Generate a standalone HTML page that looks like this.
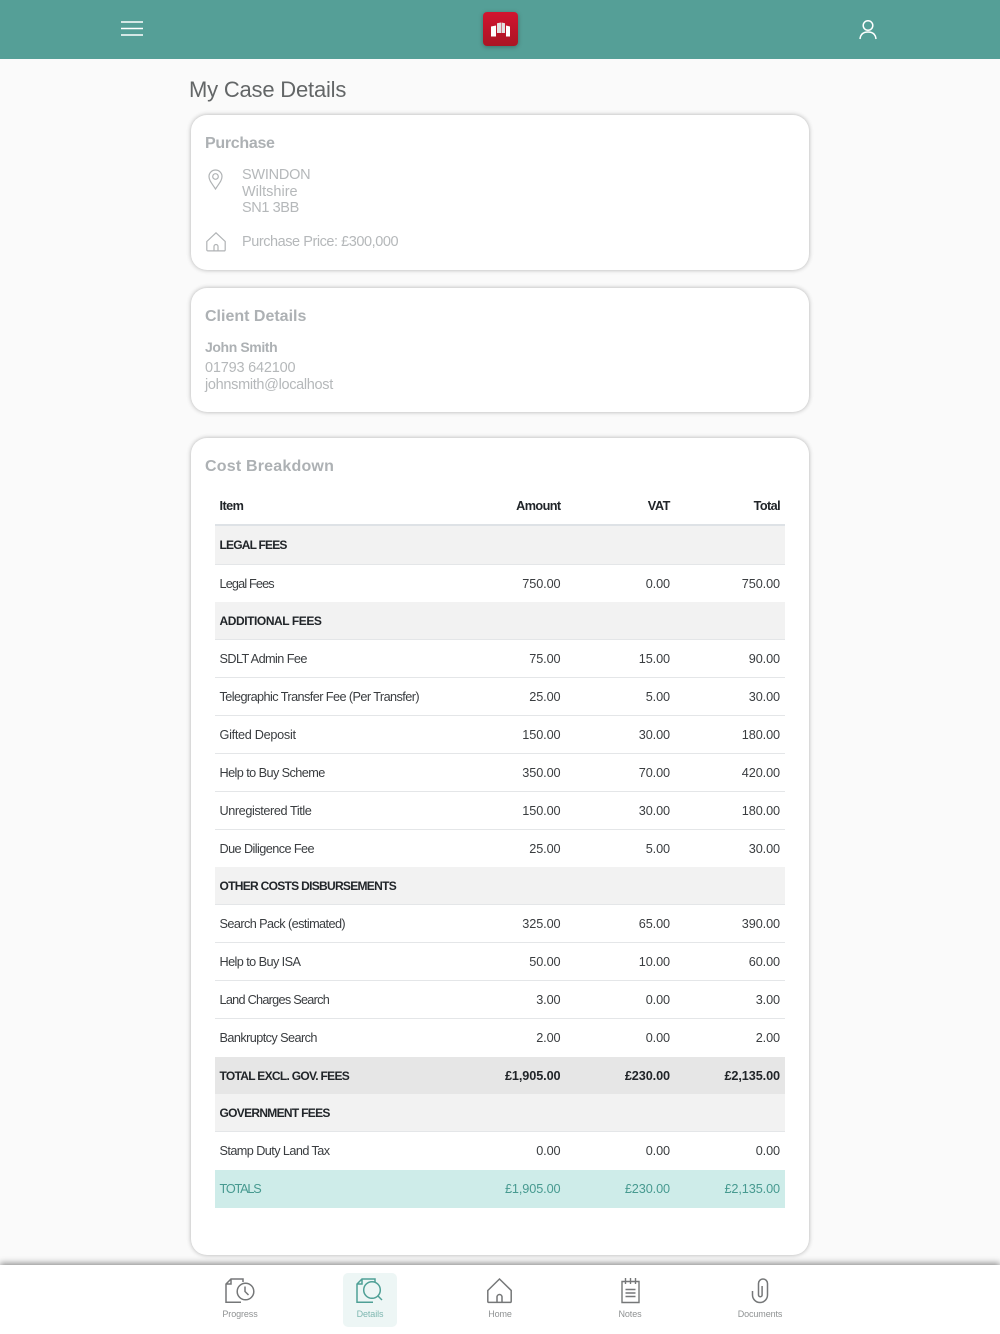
<!DOCTYPE html>
<html><head><meta charset="utf-8"><title>My Case Details</title>
<style>
*{box-sizing:border-box}
html,body{margin:0;padding:0}
body{width:1000px;height:1334px;position:relative;overflow:hidden;background:#fafafa;font-family:"Liberation Sans",sans-serif;color:#212529}
.a{position:absolute;white-space:nowrap}
.top{position:absolute;left:0;top:0;width:1000px;height:59px;background:#559f97}
.card{position:absolute;left:191px;width:618px;background:#fff;border-radius:16px;box-shadow:0 0 5px rgba(0,0,0,.3)}
.h{position:absolute;font-weight:bold;font-size:16px;color:#adb1b4;line-height:20px;white-space:nowrap}
.g{position:absolute;font-size:14.5px;color:#b5b8ba;line-height:17px;white-space:nowrap}
.r{position:absolute;left:215px;width:570px;height:38px;font-size:12.7px;line-height:37px;color:#3a3d40;border-bottom:1px solid #e4e6e8}
.r span{position:absolute;top:1px;text-align:right;width:100px;letter-spacing:-.1px}
.r span:nth-child(1){left:4.500px;text-align:left;width:260px;letter-spacing:-.58px;font-size:12.700px}
.r span:nth-child(2){left:245.500px}
.r span:nth-child(3){left:355px}
.r span:nth-child(4){left:465px}
.s{background:#f2f2f2;font-weight:bold;color:#212529}
.r.s span:nth-child(1),.r.t span:nth-child(1){font-size:12px;letter-spacing:-.7px}
.t{background:#e6e6e6;font-weight:bold;color:#212529;border:0}
.m{background:#ceecE9;color:#479a90;border:0}
.r.m span:nth-child(1){letter-spacing:-1.2px}
.nav{position:absolute;left:0;top:1265px;width:1000px;height:69px;background:#fff;box-shadow:0 -2px 6px rgba(0,0,0,.42)}
.l{position:absolute;top:1308px;width:100px;text-align:center;font-size:9px;line-height:12px;color:#8f9293;letter-spacing:-.1px}
svg{position:absolute;overflow:visible;fill:none}
</style></head><body>

<div class="top"></div>
<svg style="left:121px;top:21px" width="22" height="15" stroke="#fff" stroke-width="1.600"><path d="M0 1h22M0 7.500h22M0 14h22"/></svg>
<div class="a" style="left:483px;top:12px;width:35px;height:34px;border-radius:4px;background:linear-gradient(#d2142f,#aa1524);box-shadow:0 1px 5px rgba(0,0,0,.3)"></div>
<svg style="left:491px;top:22px" width="19" height="15"><path fill="#fff" d="M0 4.500l5-1V14.500L0 14.500z"/><path fill="#e2e2e2" d="M6 1.200l4-.7v10.500h-4z"/><path fill="#e2e2e2" d="M10.500 .5l3.500 .7v9.800h-3.500z"/><path fill="#fff" d="M15 3.500l4 1v10h-4z"/></svg>
<svg style="left:858px;top:19px" width="20" height="21" stroke="#fff" stroke-width="1.500"><circle cx="10" cy="6.500" r="4.800"/><path d="M2 20c.5-4.800 3.500-7 8-7s7.500 2.200 8 7"/></svg>

<div class="a" style="left:189px;top:76px;font-size:22px;line-height:28px;color:#636667;letter-spacing:-.2px">My Case Details</div>

<div class="card" style="top:115px;height:155px"></div>
<div class="h" style="left:205px;top:134px;letter-spacing:-.3px">Purchase</div>
<svg style="left:208px;top:169px" width="15" height="21" stroke="#b0b3b5" stroke-width="1.200"><path d="M7.500 20C4 14.500 1 11.500 1 7.500a6.500 6.500 0 0 1 13 0c0 4-3 7-6.500 12.500z"/><circle cx="7.500" cy="7.500" r="2.800"/></svg>
<div class="g" style="left:242px;top:167px;letter-spacing:-.25px">SWINDON</div>
<div class="g" style="left:242px;top:184px">Wiltshire</div>
<div class="g" style="left:242px;top:200px;letter-spacing:-.4px">SN1 3BB</div>
<svg style="left:206px;top:232px" width="20" height="20" stroke="#b0b3b5" stroke-width="1.200"><path d="M.8 9.500L10 .8l9.200 8.700v8.200a1.200 1.200 0 0 1-1.200 1.200H2a1.200 1.200 0 0 1-1.200-1.200zM8 18.800v-4.300a2 2 0 0 1 4 0v4.300"/></svg>
<div class="g" style="left:242px;top:234px;letter-spacing:-.45px">Purchase Price: £300,000</div>

<div class="card" style="top:288px;height:124px"></div>
<div class="h" style="left:205px;top:307px">Client Details</div>
<div class="g" style="left:205px;top:339px;font-weight:bold;color:#adb1b4;font-size:14px;letter-spacing:-.4px">John Smith</div>
<div class="g" style="left:205px;top:360px;letter-spacing:-.2px">01793 642100</div>
<div class="g" style="left:205px;top:377px;letter-spacing:-.32px">johnsmith@localhost</div>

<div class="card" style="top:438px;height:817px"></div>
<div class="h" style="left:205px;top:457px;letter-spacing:.2px">Cost Breakdown</div>

<div class="r" style="top:487px;height:39px;font-weight:bold;color:#212529;line-height:37px;border-bottom:2px solid #dee2e6;letter-spacing:-.5px"><span>Item</span><span style="letter-spacing:-.6px">Amount</span><span style="letter-spacing:-.4px">VAT</span><span style="letter-spacing:-.6px">Total</span></div>
<div class="r s" style="top:526px;height:39px"><span style="letter-spacing:-.8px">LEGAL FEES</span></div>
<div class="r" style="top:565px;height:37px;border:0"><span style="letter-spacing:-.85px">Legal Fees</span><span>750.00</span><span>0.00</span><span>750.00</span></div>
<div class="r s" style="top:602px"><span style="letter-spacing:-.43px">ADDITIONAL FEES</span></div>
<div class="r" style="top:640px"><span>SDLT Admin Fee</span><span>75.00</span><span>15.00</span><span>90.00</span></div>
<div class="r" style="top:678px"><span>Telegraphic Transfer Fee (Per Transfer)</span><span>25.00</span><span>5.00</span><span>30.00</span></div>
<div class="r" style="top:716px"><span style="letter-spacing:-.3px">Gifted Deposit</span><span>150.00</span><span>30.00</span><span>180.00</span></div>
<div class="r" style="top:754px"><span>Help to Buy Scheme</span><span>350.00</span><span>70.00</span><span>420.00</span></div>
<div class="r" style="top:792px"><span style="letter-spacing:-.42px">Unregistered Title</span><span>150.00</span><span>30.00</span><span>180.00</span></div>
<div class="r" style="top:830px;border:0"><span>Due Diligence Fee</span><span>25.00</span><span>5.00</span><span>30.00</span></div>
<div class="r s" style="top:867px"><span>OTHER COSTS DISBURSEMENTS</span></div>
<div class="r" style="top:905px"><span>Search Pack (estimated)</span><span>325.00</span><span>65.00</span><span>390.00</span></div>
<div class="r" style="top:943px"><span>Help to Buy ISA</span><span>50.00</span><span>10.00</span><span>60.00</span></div>
<div class="r" style="top:981px"><span style="letter-spacing:-.73px">Land Charges Search</span><span>3.00</span><span>0.00</span><span>3.00</span></div>
<div class="r" style="top:1019px;border:0"><span>Bankruptcy Search</span><span>2.00</span><span>0.00</span><span>2.00</span></div>
<div class="r t" style="top:1057px"><span>TOTAL EXCL. GOV. FEES</span><span>£1,905.00</span><span>£230.00</span><span>£2,135.00</span></div>
<div class="r s" style="top:1094px"><span>GOVERNMENT FEES</span></div>
<div class="r" style="top:1132px;height:38px;border:0"><span>Stamp Duty Land Tax</span><span>0.00</span><span>0.00</span><span>0.00</span></div>
<div class="r m" style="top:1170px"><span>TOTALS</span><span>£1,905.00</span><span>£230.00</span><span>£2,135.00</span></div>

<div class="nav"></div>
<div class="a" style="left:343px;top:1273px;width:54px;height:54px;border-radius:5px;background:#edf6f5"></div>

<svg style="left:225px;top:1278px" width="30" height="26" stroke="#757778" stroke-width="1.500"><path d="M16 1H6L1 6v18.300h15M6 1v5H1M16 1h2v3"/><circle cx="20.500" cy="13.500" r="8.300" fill="#fff"/><path d="M20 8.500v5l3.500 3.500"/></svg>
<div class="l" style="left:190px">Progress</div>

<svg style="left:356px;top:1278px" width="28" height="25" stroke="#4fa096" stroke-width="1.500"><path d="M17 1H6L1 6v18.300h16M6 1v5H1M17 1h2v3"/><circle cx="16" cy="12" r="8.300" fill="#edf6f5"/><path d="M22 18l4 4"/></svg>
<div class="l" style="left:320px;color:#7fb8b1">Details</div>

<svg style="left:487px;top:1278px" width="25" height="26" stroke="#757778" stroke-width="1.500"><path d="M.8 12.500L12.500 1l11.700 11.500v10.700a1.200 1.200 0 0 1-1.200 1.200H2a1.200 1.200 0 0 1-1.200-1.200zM10 24.400v-5.400a2.500 2.500 0 0 1 5 0v5.400"/></svg>
<div class="l" style="left:450px">Home</div>

<svg style="left:621px;top:1278px" width="19" height="26" stroke="#757778" stroke-width="1.400"><path d="M1 3.500h17v21H1zM4.500 0v6M9.500 0v6M14.500 0v6M4.500 11.500h10M4.500 15h10M4.500 18.500h10"/></svg>
<div class="l" style="left:580px">Notes</div>

<svg style="left:751px;top:1278px" width="18" height="26" stroke="#757778" stroke-width="1.500"><path d="M1.500 13v4a7.500 7.500 0 0 0 15 0V5.500a4.500 4.500 0 0 0-9 0V17a1.800 1.800 0 0 0 3.600 0V8"/></svg>
<div class="l" style="left:710px">Documents</div>

</body></html>
